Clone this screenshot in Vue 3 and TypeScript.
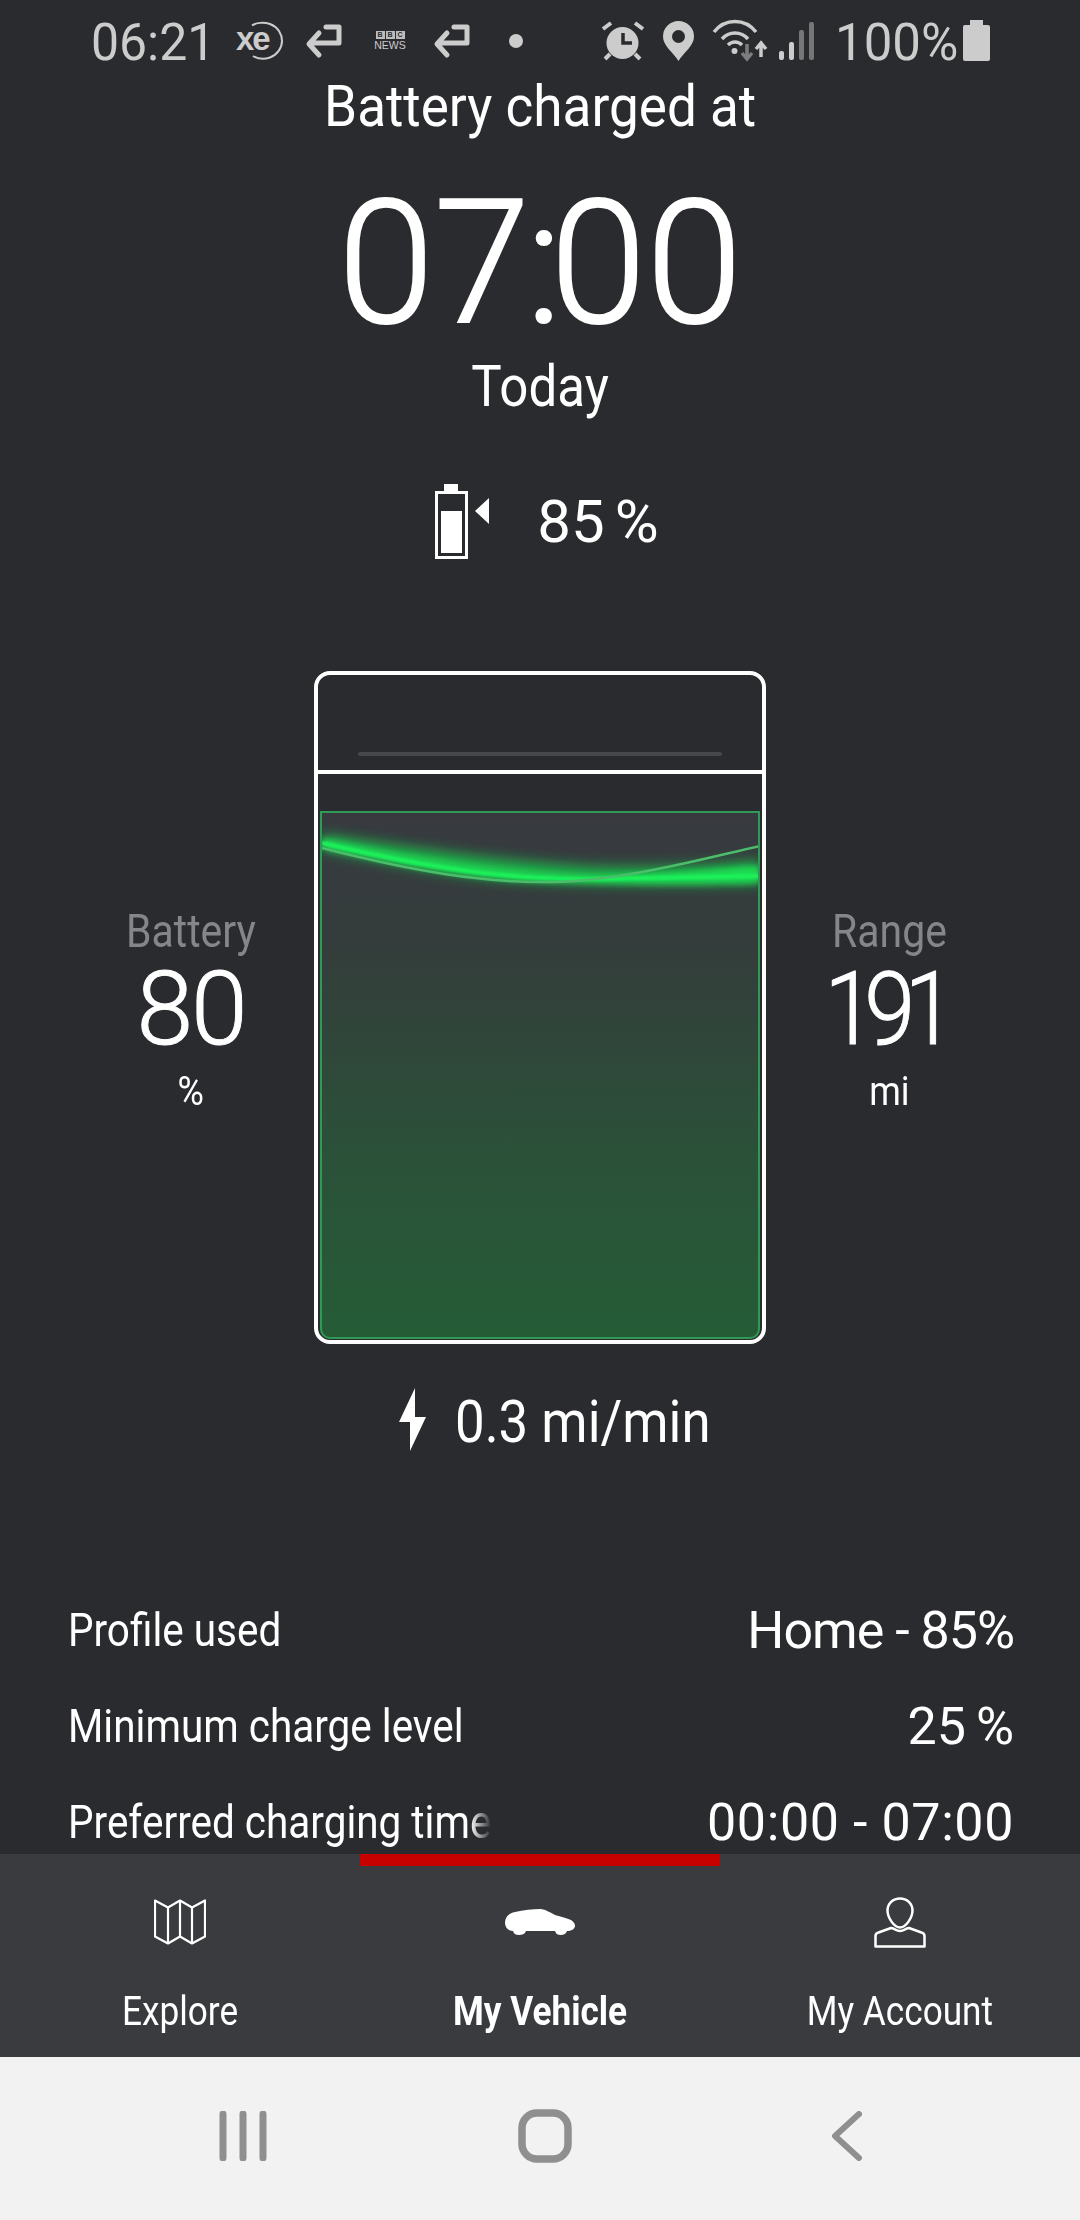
<script setup lang="ts">
const sides = [
  { label: 'Battery', value: '80', unit: '%' },
  { label: 'Range', value: '191', unit: 'mi' },
]
const rows = [
  { label: 'Profile used', value: 'Home - 85%', tone: 'tight' },
  { label: 'Minimum charge level', value: '25 %', tone: 'even' },
  { label: 'Preferred charging time', value: '00:00 - 07:00', tone: 'wide' },
]
</script>

<template>
  <div class="page">
    <header class="status">
      <span class="clock">06:21</span>
      <svg class="xe-icon" width="47" height="38" viewBox="0 0 47 38"><path d="M16 3.500C20 .5 28 0 34 2c8 3 12 10 12 17s-5 14-12 16.500c-6 2-12 1.500-17-1.500" fill="none" stroke="#ccc" stroke-width="2"/><text x="0" y="28" class="xe">xe</text></svg>
      <svg class="arrow arrow-a" width="36" height="34" viewBox="0 0 36 34"><path d="M20 3H33V19H4M13 9 3 20l10 11" fill="none" stroke="#ccc" stroke-width="5" stroke-linecap="round" stroke-linejoin="round"/></svg>
      <div class="bbc"><div class="bbc-boxes"><b>B</b><b>B</b><b>C</b></div><span>NEWS</span></div>
      <svg class="arrow arrow-b" width="36" height="34" viewBox="0 0 36 34"><path d="M20 3H33V19H4M13 9 3 20l10 11" fill="none" stroke="#ccc" stroke-width="5" stroke-linecap="round" stroke-linejoin="round"/></svg>
      <i class="dot"></i>
      <div class="grow"></div>
      <svg class="alarm" width="44" height="40" viewBox="0 0 44 40"><circle cx="21.500" cy="22" r="16" fill="#ccc"/><path d="M22 12v10h9" fill="none" stroke="#2a2b2e" stroke-width="3.500"/><path d="M2 8 10 2M42 8 34 2M9 33l-5 5M34 33l5 5" stroke="#ccc" stroke-width="4"/></svg>
      <svg class="pin" width="31" height="40" viewBox="0 0 31 40"><path fill-rule="evenodd" d="M15.500 0A15.500 15.500 0 0 1 31 15.500C31 25 21 31 15.500 40 10 31 0 25 0 15.500A15.500 15.500 0 0 1 15.500 0Zm0 9a6.500 6.500 0 1 0 0 13 6.500 6.500 0 0 0 0-13Z" fill="#ccc"/></svg>
      <svg class="wifi" width="54" height="41" viewBox="0 0 54 41"><path d="M2 12C13 -2 33 -2 44 12M10 19c7-8 19-8 26 0M16 25c4-4 10-4 14 0" fill="none" stroke="#ccc" stroke-width="3.500"/><circle cx="22.500" cy="31" r="3" fill="#ccc"/><path d="M35 24v15M30 33l5 6 5-6" fill="none" stroke="#7d7d7d" stroke-width="3.500"/><path d="M49 37V24M44 29l5-6 5 6" fill="none" stroke="#ccc" stroke-width="3.500"/></svg>
      <svg class="signal" width="36" height="38" viewBox="0 0 36 38"><rect x="0" y="29" width="5" height="9" rx="2" fill="#ccc"/><rect x="10" y="20" width="5" height="18" rx="2" fill="#ccc"/><rect x="20" y="8" width="5" height="30" rx="2" fill="#777"/><rect x="30" y="0" width="5" height="38" rx="2" fill="#777"/></svg>
      <span class="pct">100%</span>
      <svg class="batt" width="27" height="41" viewBox="0 0 27 41"><path d="M7 0h13v5h5a2 2 0 0 1 2 2v32a2 2 0 0 1-2 2H2a2 2 0 0 1-2-2V7a2 2 0 0 1 2-2h5Z" fill="#ccc"/></svg>
    </header>

    <main class="main">
      <section class="summary">
        <p class="title">Battery charged at</p>
        <p class="time">0<span class="seven">7</span><span class="colon">:</span>00</p>
        <p class="today">Today</p>
        <div class="target">
          <svg width="54" height="75" viewBox="0 0 54 75"><path d="M9 0h14v8H9Z" fill="#fff"/><rect x="1.500" y="8.500" width="30" height="65" fill="none" stroke="#fff" stroke-width="3"/><rect x="6" y="27" width="21" height="42" fill="#fff"/><path d="M40 27 54 14v26Z" fill="#fff"/></svg>
          <span>85 %</span>
        </div>
      </section>

      <section class="gauge-row">
        <div v-for="(s, i) in sides" :key="s.label" class="side" :class="i === 0 ? 'side-left' : 'side-right'">
          <span class="side-label">{{ s.label }}</span>
          <span class="side-value">{{ s.value }}</span>
          <span class="side-unit">{{ s.unit }}</span>
        </div>
        <div class="gauge">
          <div class="gauge-top"><i class="gauge-line"></i></div>
          <div class="gauge-body">
            <div class="fill">
              <svg class="wave" width="438" height="110" viewBox="0 0 438 110" preserveAspectRatio="none">
                <defs>
                  <filter id="glow" x="-10%" y="-50%" width="120%" height="200%"><feGaussianBlur stdDeviation="7"/></filter>
                  <filter id="mid" x="-10%" y="-50%" width="120%" height="200%"><feGaussianBlur stdDeviation="3"/></filter>
                  <filter id="soft" x="-10%" y="-50%" width="120%" height="200%"><feGaussianBlur stdDeviation="1"/></filter>
                </defs>
                <path d="M0 22C110 38 190 50 270 54 340 56 400 52 438 48V70C340 72 250 70 190 66 110 60 50 44 0 36Z" fill="#19d94e" filter="url(#glow)" opacity=".8"/>
                <path d="M0 25C100 47 180 60 270 62 340 61 400 56 438 53V70C340 72 250 70 190 67 110 60 50 44 0 35Z" fill="#1be655" filter="url(#mid)" opacity=".85"/>
                <path d="M0 30C110 56 190 67 270 66 340 65 400 64 438 63" fill="none" stroke="#1cf25a" stroke-width="4" filter="url(#soft)"/>
                <path d="M0 35C90 58 160 70 230 69 300 68 380 46 438 33" fill="none" stroke="#4bbd6b" stroke-width="2.500"/>
              </svg>
            </div>
          </div>
        </div>
      </section>

      <div class="rate">
        <svg width="27" height="63" viewBox="0 0 27 63"><path d="M16 0 0 34h11V63L27 29H16Z" fill="#fff"/></svg>
        <span>0.3 mi/min</span>
      </div>

      <section class="rows">
        <div v-for="r in rows" :key="r.label" class="row">
          <span class="row-label">{{ r.label }}</span>
          <span class="row-value" :class="r.tone">{{ r.value }}</span>
        </div>
      </section>
    </main>

    <nav class="tabs">
      <i class="tab-marker"></i>
      <div class="tab">
        <div class="tab-icon"><svg width="52" height="46" viewBox="0 0 52 46"><path d="M1 1.500l13 7 12-7 12 7 13-7v36l-13 7-12-7-12 7-13-7ZM14 8.500v36M26 1.500v36M38 8.500v36" fill="none" stroke="#fff" stroke-width="2.200" stroke-linejoin="round"/></svg></div>
        <span>Explore</span>
      </div>
      <div class="tab tab-active">
        <div class="tab-icon"><svg width="70" height="26" viewBox="0 0 70 26"><path d="M0 14C0 8 4 4 10 3 18 1 28 0 36 0 42 1 46 4 50 6 56 8 62 9 66 11 69 13 70 15 70 17 70 20 66 22 62 22 61 25 58 26 56 26 53 26 51 25 50 22H21C20 25 17 26 14 26 11 26 9 25 8 22 3 22 0 18 0 14Z" fill="#fff"/></svg></div>
        <span>My Vehicle</span>
      </div>
      <div class="tab">
        <div class="tab-icon"><svg width="52" height="51" viewBox="0 0 52 51"><path d="M26 1.500c7 0 12.500 5 12.500 12S32 30.500 26 30.500 13.500 20.500 13.500 13.500 19 1.500 26 1.500Z" fill="none" stroke="#fff" stroke-width="2.500"/><path d="M1.500 49.500V39c0-2 1-3 3-3.500L17 31c3 0 5 3 9 3s6-3 9-3l12.500 4.500c2 .5 3 1.500 3 3.500v10.500Z" fill="none" stroke="#fff" stroke-width="2.500" stroke-linejoin="round"/></svg></div>
        <span>My Account</span>
      </div>
    </nav>

    <footer class="sysnav">
      <svg class="sys-recent" width="48" height="50" viewBox="0 0 48 50"><path d="M4 3v44M24 3v44M44 3v44" stroke="#8f8f8f" stroke-width="7" stroke-linecap="round"/></svg>
      <svg class="sys-home" width="54" height="54" viewBox="0 0 54 54"><rect x="4" y="4" width="46" height="46" rx="15" fill="none" stroke="#8f8f8f" stroke-width="7.500"/></svg>
      <svg class="sys-back" width="30" height="50" viewBox="0 0 30 50"><path d="M27 3 3 25l24 22" fill="none" stroke="#8f8f8f" stroke-width="6" stroke-linecap="round" stroke-linejoin="round"/></svg>
    </footer>
  </div>
</template>

<style>
html, body { margin: 0; background: #2a2b2e; }
</style>

<style scoped>
.page {
  width: 1080px;
  height: 2220px;
  display: flex;
  flex-direction: column;
  overflow: hidden;
  background: #2a2b2e;
  color: #fff;
  font-family: Roboto, "Liberation Sans", sans-serif;
}
.status {
  height: 78px;
  flex: none;
  display: flex;
  align-items: center;
  padding: 3px 90px 0 91px;
  box-sizing: border-box;
  color: #ccc;
  font-size: 52px;
  white-space: nowrap;
}
.status svg { flex: none; overflow: visible; }
.clock { width: 119px; flex: none; padding-top: 3px; transform: scaleX(.96); transform-origin: left; }
.xe-icon { margin-left: 26px; }
.xe { font: 700 33px "Liberation Sans", sans-serif; letter-spacing: -2px; fill: #ccc; }
.arrow-a { margin-left: 23px; }
.bbc { width: 30px; flex: none; margin-left: 33px; display: flex; flex-direction: column; align-items: center; font-family: "Liberation Sans", sans-serif; font-size: 10.500px; line-height: 11px; }
.bbc-boxes { display: flex; gap: 1px; height: 8px; margin-bottom: 1px; }
.bbc-boxes b { width: 9px; height: 8px; background: #bdbdbd; color: #2a2b2e; font-size: 7px; line-height: 8px; text-align: center; }
.arrow-b { margin-left: 29px; }
.dot { width: 14px; height: 14px; flex: none; border-radius: 50%; background: #ccc; margin-left: 39px; }
.grow { flex: 1; }
.pin, .wifi { margin-left: 18px; }
.signal { margin-left: 13px; }
.pct { width: 120px; flex: none; margin-left: 20px; padding-top: 3px; transform: scaleX(.98); transform-origin: left; }
.batt { margin-left: 8px; }
.main { flex: 1; min-height: 0; display: flex; flex-direction: column; align-items: stretch; }
.summary { display: flex; flex-direction: column; align-items: center; }
.title { margin: 0; font-size: 58px; line-height: 56px; white-space: nowrap; transform: scaleX(.915); }
.time { margin: 34px 0 0; font-size: 173px; line-height: 190px; font-weight: 300; -webkit-text-stroke: 2px #fff; white-space: nowrap; }
.seven { letter-spacing: -4px; }
.colon { letter-spacing: -12px; }
.today { margin: -4px 0 0; font-size: 58px; line-height: 64px; transform: scaleX(.88); }
.target { display: flex; align-items: center; gap: 48px; margin-top: 66px; padding-left: 14px; font-size: 60px; word-spacing: -5px; }
.gauge-row { position: relative; display: flex; justify-content: center; margin-top: 112px; }
.gauge {
  width: 452px;
  height: 673px;
  box-sizing: border-box;
  border: 4px solid #fff;
  border-radius: 16px;
  display: flex;
  flex-direction: column;
}
.gauge-top {
  height: 99px;
  flex: none;
  box-sizing: border-box;
  border-bottom: 4px solid #fff;
  display: flex;
  justify-content: center;
  align-items: flex-end;
  padding-bottom: 14px;
}
.gauge-line { width: 364px; height: 4px; border-radius: 2px; background: #47484c; }
.gauge-body { flex: 1; min-height: 0; padding: 37px 2px 1px; display: flex; }
.fill {
  flex: 1;
  position: relative;
  box-sizing: border-box;
  border: 2px solid #2e9a55;
  border-radius: 0 0 10px 10px;
  background: linear-gradient(#383a40 0%, #343d3b 25%, #2b5139 65%, #255c36 100%);
  overflow: hidden;
}
.wave { position: absolute; left: 0; top: 0; }
.side {
  position: absolute;
  top: 234px;
  width: 200px;
  display: flex;
  flex-direction: column;
  align-items: center;
}
.side-left { left: 91px; }
.side-right { right: 91px; }
.side-label { font-size: 46px; line-height: 52px; color: #85868a; transform: scaleX(.89); }
.side-value { font-size: 102px; line-height: 104px; font-weight: 300; -webkit-text-stroke: 1px #fff; letter-spacing: -2px; }
.side-right .side-value { letter-spacing: -12px; padding-right: 11px; transform: scaleX(.9); }
.side-unit { font-size: 40px; line-height: 46px; margin-top: 8px; transform: scaleX(.9); }
.rate { display: flex; align-items: center; justify-content: center; gap: 29px; margin-top: 40px; height: 70px; font-size: 60px; padding-left: 26px; }
.rate span { width: 252px; align-self: flex-start; line-height: 76px; white-space: nowrap; transform: scaleX(.88); transform-origin: left; }
.rows { margin-top: 145px; padding: 0 66px 0 68px; display: flex; flex-direction: column; gap: 34px; }
.row { display: flex; justify-content: space-between; align-items: center; height: 62px; white-space: nowrap; }
.row-label { font-size: 46px; transform: scaleX(.88); transform-origin: left; }
.row:last-child .row-label { -webkit-mask-image: linear-gradient(90deg, #000 95%, transparent 100%); mask-image: linear-gradient(90deg, #000 95%, transparent 100%); }
.row-value { font-size: 52px; }
.tight { letter-spacing: -1px; }
.even { word-spacing: -3px; }
.wide { letter-spacing: .6px; }
.tabs {
  position: relative;
  flex: none;
  height: 203px;
  background: #3a3b3f;
  display: grid;
  grid-template-columns: repeat(3, 360px);
}
.tab-marker { position: absolute; left: 360px; top: 0; width: 360px; height: 12px; background: #c70000; }
.tab { display: flex; flex-direction: column; align-items: center; font-size: 40px; }
.tab-icon { height: 54px; margin-top: 41px; display: flex; align-items: center; }
.tab span { margin-top: 39px; transform: scaleX(.88); white-space: nowrap; }
.tab-active { font-weight: 700; }
.sysnav {
  flex: none;
  height: 163px;
  background: #f2f2f2;
  display: flex;
  align-items: center;
  padding: 0 0 6px 219px;
  box-sizing: border-box;
}
.sys-home { margin-left: 251px; }
.sys-back { margin-left: 260px; }
</style>
